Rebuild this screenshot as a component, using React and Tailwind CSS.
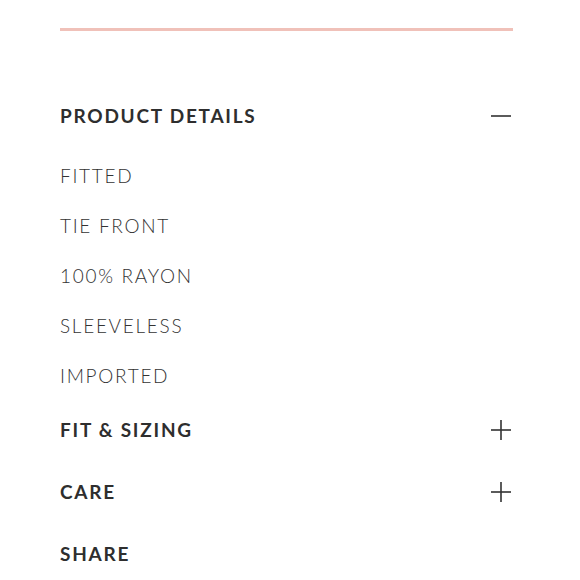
import React from "react";

const Minus = () => (
  <svg width="20" height="20" viewBox="0 0 20 20" className="block">
    <line x1="0" y1="10" x2="20" y2="10" stroke="#333" strokeWidth="1.6" />
  </svg>
);
const Plus = () => (
  <svg width="20" height="20" viewBox="0 0 20 20" className="block">
    <line x1="0" y1="10" x2="20" y2="10" stroke="#333" strokeWidth="1.6" />
    <line x1="10" y1="0" x2="10" y2="20" stroke="#333" strokeWidth="1.6" />
  </svg>
);

const Header = ({ label, icon, className = "" }) => (
  <div className={`flex items-center justify-between h-[40px] ${className}`}>
    <span className="text-[19px] font-bold tracking-[1.75px] text-[#2e2e2e]">{label}</span>
    <span className="mr-[2px]">{icon}</span>
  </div>
);

export default function App() {
  const items = ["FITTED", "TIE FRONT", "100% RAYON", "SLEEVELESS", "IMPORTED"];
  return (
    <div
      className="w-[580px] h-[580px] bg-white pl-[60px] pr-[67px] overflow-hidden"
      style={{ fontFamily: "Lato, 'Open Sans', sans-serif" }}
    >
      <div className="pt-[28px]">
        <div className="h-[3px] bg-[#f0c1b9]" />
      </div>
      <Header label="PRODUCT DETAILS" icon={<Minus />} className="mt-[65px]" />
      <div className="mt-[15px] flex flex-col">
        {items.map((t) => (
          <div key={t} className="h-[50px] flex items-center text-[19px] font-light tracking-[1.7px] text-[#333]">
            {t}
          </div>
        ))}
      </div>
      <Header label="FIT & SIZING" icon={<Plus />} className="mt-[9px]" />
      <Header label="CARE" icon={<Plus />} className="mt-[22px]" />
      <Header label="SHARE" icon={null} className="mt-[22px]" />
    </div>
  );
}
